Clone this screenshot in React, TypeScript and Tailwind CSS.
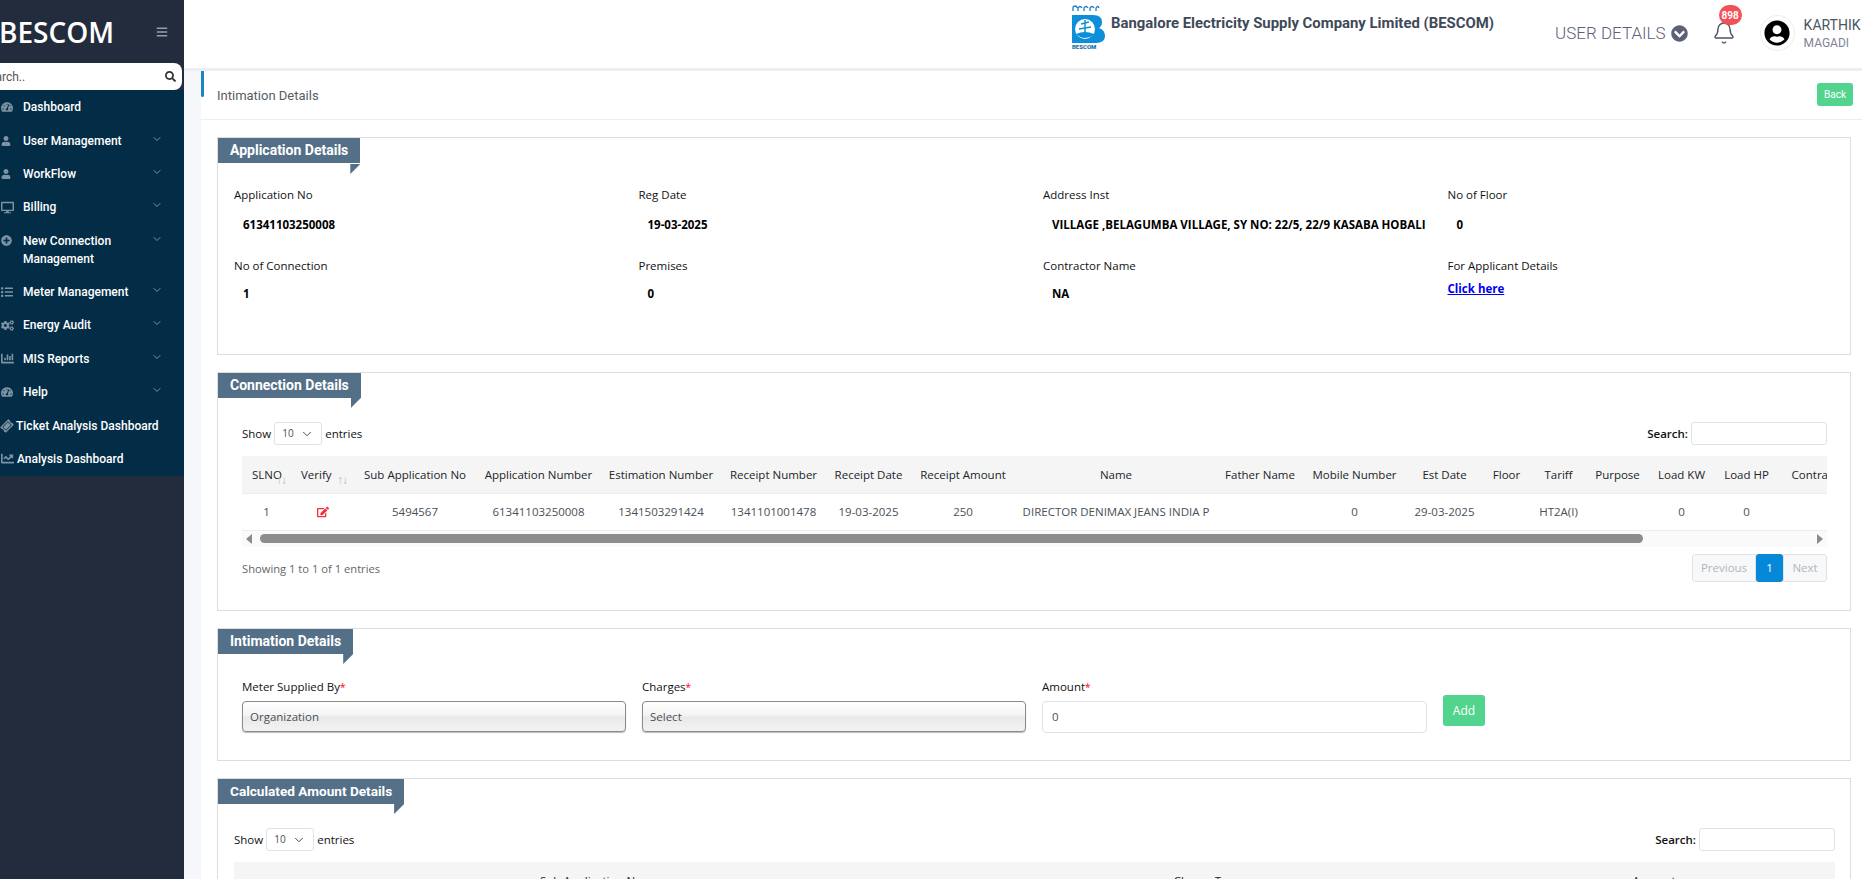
import React from "react";
import { FaTachometerAlt, FaUser, FaDesktop, FaPlusCircle, FaList, FaCogs, FaChartBar, FaTicketAlt, FaChartLine, FaEdit, FaChevronCircleDown, FaBars, FaUserCircle, FaSearch } from "react-icons/fa";
import { ChevronDown, Bell } from "lucide-react";

const nav = [
  { icon: FaTachometerAlt, size: 12, label: "Dashboard" },
  { icon: FaUser, size: 10, label: "User Management", chev: true },
  { icon: FaUser, size: 10, label: "WorkFlow", chev: true },
  { icon: FaDesktop, size: 13, label: "Billing", chev: true },
  { icon: FaPlusCircle, size: 11, label: "New Connection Management", chev: true },
  { icon: FaList, size: 12, label: "Meter Management", chev: true },
  { icon: FaCogs, size: 13, label: "Energy Audit", chev: true },
  { icon: FaChartBar, size: 13, label: "MIS Reports", chev: true },
  { icon: FaTachometerAlt, size: 12, label: "Help", chev: true },
];

function Ribbon({ title, gap, small }: { title: string; gap?: boolean; small?: boolean }) {
  return (
    <div className="flex w-fit flex-col">
      <div className={`flex h-[25px] items-center bg-[#537088] pl-[12px] pr-[12px] font-bold text-white ${small ? "text-[13.6px]" : "text-[14px]"}`}>{title}</div>
      <div className={`h-[10px] w-[10px] self-end bg-[#537088] [clip-path:polygon(100%_0,0_0,0_100%)] ${gap ? "mt-px" : ""}`} />
    </div>
  );
}

function Field({ label, value, gap = 12, link }: { label: string; value: string; gap?: number; link?: boolean }) {
  return (
    <div className="font-['Open_Sans',sans-serif] text-[11.5px] leading-[18px]">
      <div className="text-[#111111]">{label}</div>
      {link ? (
        <a className="mt-[5px] block font-bold text-[#0000ee] underline">{value}</a>
      ) : (
        <div style={{ marginTop: gap }} className="whitespace-nowrap pl-[9px] font-bold text-black">{value}</div>
      )}
    </div>
  );
}

function Toolbar() {
  return (
    <div className="flex h-[23px] items-center justify-between font-['Open_Sans',sans-serif] text-[11.5px] text-[#111111]">
      <div className="flex items-center gap-[3px]">
        <span>Show</span>
        <div className="flex h-[23px] w-[48px] items-center justify-between rounded-[3px] border border-[#dee2e6] bg-white pl-[7px] pr-[7px] text-[10px] text-[#495057]">
          10 <ChevronDown size={14} strokeWidth={1.5} className="text-[#333]" />
        </div>
        <span>entries</span>
      </div>
      <div className="flex items-center gap-[3px]">
        <span className="font-semibold">Search:</span>
        <div className="h-[23px] w-[136px] rounded-[3px] border border-[#dee2e6] bg-white" />
      </div>
    </div>
  );
}

const cols = [
  ["SLNO", 49], ["Verify", 63], ["Sub Application No", 122], ["Application Number", 125], ["Estimation Number", 120],
  ["Receipt Number", 105], ["Receipt Date", 85], ["Receipt Amount", 104], ["Name", 202], ["Father Name", 86],
  ["Mobile Number", 103], ["Est Date", 77], ["Floor", 47], ["Tariff", 57], ["Purpose", 61], ["Load KW", 67], ["Load HP", 63], ["Contractor Name", 120],
] as const;
const cells = ["1", "", "5494567", "61341103250008", "1341503291424", "1341101001478", "19-03-2025", "250", "DIRECTOR DENIMAX JEANS INDIA P", "", "0", "29-03-2025", "", "HT2A(I)", "", "0", "0", ""];

function Sort({ className }: { className: string }) {
  return <span className={`absolute top-[15px] text-[12px] font-normal tracking-[-1px] text-[#bbbbbb] ${className}`}>↑↓</span>;
}

export default function App() {
  return (
    <div className="flex h-[879px] w-[1862px] overflow-hidden bg-[#f6f7fb] font-['Roboto',sans-serif]">
      <aside className="flex w-[184px] shrink-0 flex-col bg-[#232c3d]">
        <div className="flex h-[63px] items-center justify-between pl-0 pr-[16px] py-[10px]">
          <span className="ml-[-1px] font-['Open_Sans',sans-serif] text-[28px] font-semibold leading-none text-white">BESCOM</span>
          <FaBars className="text-[#8ea0ac]" size={12} />
        </div>
        <div className="mr-[2px] flex h-[27px] items-center justify-between overflow-hidden rounded-r-lg bg-white pr-[6px] text-[12px] text-[#555]">
          <span className="ml-[-18px]">Search..</span>
          <FaSearch size={11} className="text-[#333]" />
        </div>
        <nav className="bg-[#032c47] pb-[0.5px] pt-[0.5px] text-[12px] font-medium leading-[18px] text-white">
          {nav.map((n) => (
            <div key={n.label} className="flex py-[7.7px] pr-[21px]">
              <span className="flex h-[18px] w-[23px] shrink-0 items-center pl-px"><n.icon size={n.size} className="text-[#7d93a3]" /></span>
              <span className="flex-1">{n.label}</span>
              {n.chev && <ChevronDown size={12} className="mt-[1px] shrink-0 text-[#7d93a3]" />}
            </div>
          ))}
          <div className="flex items-center py-[7.7px]">
            <span className="flex w-[16px] shrink-0 pl-px"><FaTicketAlt size={12} className="-rotate-45 text-[#7d93a3]" /></span>Ticket Analysis Dashboard
          </div>
          <div className="flex items-center py-[7.7px]">
            <span className="flex w-[17px] shrink-0 pl-px"><FaChartLine size={13} className="text-[#7d93a3]" /></span>Analysis Dashboard
          </div>
        </nav>
      </aside>

      <main className="flex min-w-0 flex-1 flex-col">
        <header className="flex h-[71px] shrink-0 items-start border-b-[3px] border-[#eceef2] bg-white">
          <div className="ml-[888px] mt-[5px] flex h-[45px] w-[38px] shrink-0 flex-col items-start">
            <svg width="34" height="38" viewBox="0 0 34 38">
              <path d="M1 6V3q0-2 2-2t2 2M6 6V3q2-3 4 0M12 6V3q2-3 4 0M18 6V3q2-3 4 0M24 6V3q2-3 3 0" fill="none" stroke="#1b7fc0" strokeWidth="1.3" />
              <path d="M0 10h21q9 0 9 7 0 4-3 6 6 2 6 8 0 7-9 7H0z" fill="#0b8fd8" />
              <circle cx="13" cy="24" r="10" fill="#fff" />
              <path d="M13 15v17M9 19l8-2M7 24l12-2" stroke="#0b8fd8" strokeWidth="1.5" fill="none" />
              <path d="M4 29q9-4 18 0v1q-4 3-9 3-5 0-9-4z" fill="#0b8fd8" />
            </svg>
            <span className="mt-[1px] text-[6px] font-black leading-none text-[#1a6fa8]">BESCOM</span>
          </div>
          <div className="ml-[1px] mt-[14px] whitespace-nowrap text-[14.9px] font-bold leading-[18px] text-[#3f4a59]">Bangalore Electricity Supply Company Limited (BESCOM)</div>
          <div className="ml-[61px] mt-[21px] flex items-center gap-[5px]">
            <span className="whitespace-nowrap text-[17px] font-light leading-[24px] text-[#5c6178]">USER DETAILS</span>
            <FaChevronCircleDown size={17} className="text-[#5c6178]" />
          </div>
          <div className="relative ml-[25px] mt-[21px] h-[24px] w-[22px]">
            <Bell size={24} strokeWidth={1.4} className="-ml-px text-[#4f5468]" />
            <span className="absolute left-[6px] top-[-16px] flex h-[20px] w-[23px] items-center justify-center rounded-full bg-[#f25157] text-[10px] font-bold text-white">898</span>
          </div>
          <div className="ml-[25px] mt-[15px] flex h-[36px] w-[35px] shrink-0 items-center justify-center rounded-full border border-[#eee] bg-white">
            <FaUserCircle size={26} className="text-black" />
          </div>
          <div className="ml-[9px] mt-[15px] whitespace-nowrap">
            <div className="text-[14px] leading-[20px] text-[#4b5563]">KARTHIK</div>
            <div className="text-[12px] leading-[16px] text-[#7f8399]">MAGADI</div>
          </div>
        </header>

        <div className="ml-[17px] flex min-h-0 flex-1 flex-col bg-white">
          <div className="relative flex h-[49px] shrink-0 items-center justify-between border-b border-[#eeeeee] pl-[16px] pr-[9px]">
            <span className="absolute left-0 top-0 h-[26px] w-[3px] rounded-b-sm bg-[#1a86c4]" />
            <span className="mt-px text-[13px] text-[#555c66]">Intimation Details</span>
            <button className="mt-[-1px] flex h-[23px] w-[36px] items-center justify-center rounded-[3px] bg-[#52d48e] text-[10px] text-white">Back</button>
          </div>

          <div className="flex flex-col gap-[17px] pl-[16px] pr-[11px] pt-[17px]">
            <section className="h-[218px] shrink-0 border border-[#dddddd]">
              <Ribbon title="Application Details" gap />
              <div className="mt-[12px] grid grid-cols-[404.5px_404.5px_404.5px_1fr] gap-y-[23px] pl-[16px]">
                <Field label="Application No" value="61341103250008" />
                <Field label="Reg Date" value="19-03-2025" />
                <Field label="Address Inst" value="VILLAGE ,BELAGUMBA VILLAGE, SY NO: 22/5, 22/9 KASABA HOBALI" />
                <Field label="No of Floor" value="0" />
                <Field label="No of Connection" value="1" gap={10} />
                <Field label="Premises" value="0" gap={10} />
                <Field label="Contractor Name" value="NA" gap={10} />
                <Field label="For Applicant Details" value="Click here" link />
              </div>
            </section>

            <section className="h-[239px] shrink-0 border border-[#dddddd]">
              <Ribbon title="Connection Details" />
              <div className="pl-[24px] pr-[23px] pt-[14px]">
                <Toolbar />
                <div className="mt-[11px] overflow-hidden font-['Open_Sans',sans-serif] text-[11.5px] text-[#495057]">
                  <table className="table-fixed border-collapse" style={{ width: cols.reduce((a, c) => a + c[1], 0) }}>
                    <colgroup>{cols.map((c) => <col key={c[0]} style={{ width: c[1] }} />)}</colgroup>
                    <thead>
                      <tr className="h-[37px] border-b border-[#eeeeee] bg-[#f5f5f5]">
                        {cols.map((c, i) => (
                          <th key={c[0]} className={`relative whitespace-nowrap text-center font-medium text-[#212529] ${i < 2 ? "pl-[10px] text-left" : ""}`}>
                            {c[0]}
                            {i === 0 && <Sort className="left-[34px]" />}
                            {i === 1 && <Sort className="left-[46px]" />}
                          </th>
                        ))}
                      </tr>
                    </thead>
                    <tbody>
                      <tr className="h-[37px] border-b border-[#eeeeee]">
                        {cells.map((c, i) => (
                          <td key={i} className="overflow-hidden whitespace-nowrap text-center">
                            {i === 1 ? <FaEdit size={12} className="mx-auto text-[#f0303c]" /> : c}
                          </td>
                        ))}
                      </tr>
                    </tbody>
                  </table>
                </div>
                <div className="flex h-[16px] items-center bg-[#fafafa] pl-[4px] pr-[4px]">
                  <span className="h-0 w-0 border-y-[5px] border-r-[6px] border-y-transparent border-r-[#8c8c8c]" />
                  <div className="ml-[8px] h-[9px] w-[1383px] rounded-full bg-[#8c8c8c]" />
                  <span className="ml-auto h-0 w-0 border-y-[5px] border-l-[6px] border-y-transparent border-l-[#8c8c8c]" />
                </div>
                <div className="mt-[7px] flex items-start justify-between font-['Open_Sans',sans-serif] text-[11.5px]">
                  <span className="pt-[7px] text-[11.2px] text-[#666666]">Showing 1 to 1 of 1 entries</span>
                  <div className="flex h-[28px] items-stretch overflow-hidden rounded-[3px]">
                    <span className="flex w-[64px] items-center justify-center rounded-l-[3px] border border-[#dee2e6] bg-[#f7f8fa] text-[#b0b6bd]">Previous</span>
                    <span className="flex w-[27px] items-center justify-center rounded-[3px] bg-[#0688d8] text-white">1</span>
                    <span className="flex w-[44px] items-center justify-center rounded-r-[3px] border border-[#dee2e6] bg-[#f7f8fa] text-[#b0b6bd]">Next</span>
                  </div>
                </div>
              </div>
            </section>

            <section className="h-[133px] shrink-0 border border-[#dddddd]">
              <Ribbon title="Intimation Details" />
              <div className="mt-[14px] flex items-start gap-[16px] pl-[24px] font-['Open_Sans',sans-serif] text-[11.5px] leading-[18px] text-[#111111]">
                {[["Meter Supplied By", "Organization"], ["Charges", "Select"]].map(([l, v]) => (
                  <div key={l} className="w-[384px]">
                    <div>{l}<span className="text-[10px] text-[#f00]">*</span></div>
                    <div className="mt-[5px] flex h-[31px] items-center rounded-[4px] border border-[#8a8a8a] bg-[linear-gradient(#ffffff,#f4f4f4_45%,#e9e9e9_52%,#f3f3f3)] pl-[7px] text-[#495057] shadow-[0_1px_1px_#bbb]">{v}</div>
                  </div>
                ))}
                <div className="w-[385px]">
                  <div>Amount<span className="text-[10px] text-[#f00]">*</span></div>
                  <div className="mt-[5px] flex h-[32px] items-center rounded-[4px] border border-[#dee2e6] bg-white pl-[9px] text-[#495057]">0</div>
                </div>
                <button className="mt-[17px] flex h-[31px] w-[42px] items-center justify-center rounded-[3px] bg-[#52d48e] text-[12px] text-white">Add</button>
              </div>
            </section>

            <section className="shrink-0 border border-[#dddddd]">
              <Ribbon title="Calculated Amount Details" small />
              <div className="pl-[16px] pr-[15px] pt-[14px]">
                <Toolbar />
                <div className="mt-[11px] grid h-[37px] grid-cols-[714px_518px_1fr] items-center bg-[#f5f5f5] text-center font-['Open_Sans',sans-serif] text-[11.5px] font-medium text-[#212529]">
                  <span>Sub Application No</span>
                  <span>Charge Type</span>
                  <span className="pl-[7px]">Amount</span>
                </div>
              </div>
            </section>
          </div>
        </div>
      </main>
    </div>
  );
}
